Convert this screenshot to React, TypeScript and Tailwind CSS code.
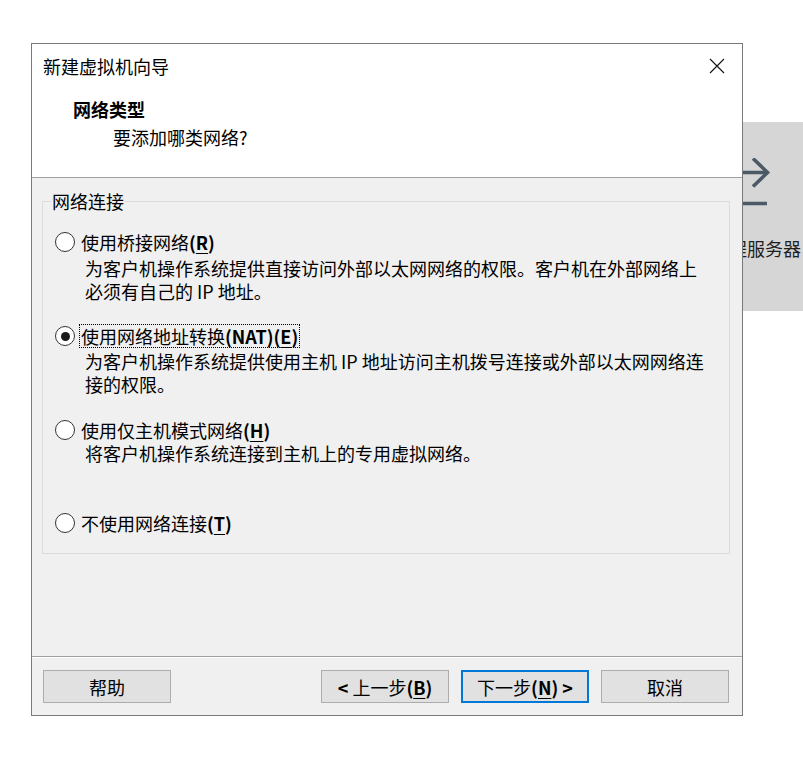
import React, { useState } from "react";

const font = "font-['Noto_Sans_CJK_SC',_'Noto_Sans',_sans-serif]";

function Radio({ checked }: { checked: boolean }) {
  return (
    <span className="w-[20px] h-[20px] rounded-full border border-[#333333] bg-white flex items-center justify-center shrink-0">
      {checked && <span className="w-[9px] h-[9px] rounded-full bg-[#1a1a1a]" />}
    </span>
  );
}

function U({ children }: { children: React.ReactNode }) {
  return <span className="underline underline-offset-[3px] decoration-1">{children}</span>;
}

type Opt = {
  id: string;
  label: React.ReactNode;
  desc: string[];
  descTop: string;
  top: string;
};

export default function App() {
  const [selected, setSelected] = useState("nat");

  const options: Opt[] = [
    {
      id: "bridge",
      label: (
        <>
          使用桥接网络<b>(<U>R</U>)</b>
        </>
      ),
      desc: ["为客户机操作系统提供直接访问外部以太网网络的权限。客户机在外部网络上", "必须有自己的 IP 地址。"],
      descTop: "mt-[3px]",
      top: "mt-[17px]",
    },
    {
      id: "nat",
      label: (
        <>
          使用网络地址转换<b>(NAT)(<U>E</U>)</b>
        </>
      ),
      desc: ["为客户机操作系统提供使用主机 IP 地址访问主机拨号连接或外部以太网网络连", "接的权限。"],
      descTop: "mt-[2px]",
      top: "mt-[21px]",
    },
    {
      id: "host",
      label: (
        <>
          使用仅主机模式网络<b>(<U>H</U>)</b>
        </>
      ),
      desc: ["将客户机操作系统连接到主机上的专用虚拟网络。"],
      descTop: "mt-0",
      top: "mt-[22px]",
    },
    {
      id: "none",
      label: (
        <>
          不使用网络连接<b>(<U>T</U>)</b>
        </>
      ),
      desc: [],
      descTop: "mt-0",
      top: "mt-[46px]",
    },
  ];

  return (
    <div className={`relative w-[803px] h-[759px] overflow-hidden bg-white text-black text-[18px] ${font}`}>
      {/* window behind the dialog */}
      <div className="absolute left-[700px] top-[122px] w-[200px] h-[189px] bg-[#d6d6d6] pl-[29px] pt-[36px]">
        <svg width="42" height="48" viewBox="0 0 42 48" fill="none" stroke="#4b5a66" strokeWidth="3.6">
          <path d="M0 14.5 H38" />
          <path d="M24 0.5 L38.5 14.5 L24 28.5" />
          <path d="M0 45.5 H38" />
        </svg>
        <div className="mt-[30px] leading-[24px] text-[#1e1e1e] whitespace-nowrap">程服务器</div>
      </div>

      {/* dialog */}
      <div className="absolute left-[31px] top-[43px] w-[712px] h-[673px] border border-[#7a7a7a] bg-[#f0f0f0] flex flex-col">
        <div className="bg-white border-b border-[#a0a0a0] h-[134px]">
          <div className="h-[42px] pt-[2px] flex items-center justify-between pl-[11px] pr-[17px]">
            <span className="leading-[24px]">新建虚拟机向导</span>
            <svg width="16" height="16" viewBox="0 0 16 16" stroke="#111" strokeWidth="1.1">
              <path d="M1 1 L15 15 M15 1 L1 15" />
            </svg>
          </div>
          <div className="mt-[11px] pl-[41px] leading-[24px] font-bold">网络类型</div>
          <div className="mt-[4px] pl-[81px] leading-[24px]">要添加哪类网络?</div>
        </div>

        <div className="flex-1 pt-[11px] pl-[10px] pr-[12px]">
          <fieldset className="border border-[#dcdcdc] pb-[18px]">
            <legend className="ml-[8px] px-[1px] leading-[24px]">网络连接</legend>
            {options.map((o) => (
              <div key={o.id} className={o.top}>
                <div
                  className="flex items-center pl-[12px] h-[24px] cursor-default"
                  onClick={() => setSelected(o.id)}
                >
                  <Radio checked={selected === o.id} />
                  <span
                    className={`ml-[4px] leading-[22px] px-[1px] border ${
                      selected === o.id ? "border-dotted border-black" : "border-transparent"
                    }`}
                  >
                    {o.label}
                  </span>
                </div>
                {o.desc.length > 0 && (
                  <div className={`${o.descTop} pl-[42px]`}>
                    {o.desc.map((d, i) => (
                      <div key={i} className="leading-[23px] whitespace-nowrap">
                        {d}
                      </div>
                    ))}
                  </div>
                )}
              </div>
            ))}
          </fieldset>
        </div>

        <div className="border-t border-[#a0a0a0]">
          <div className="border-t border-white h-[58px] flex items-center pl-[11px] pr-[13px]">
            <button className="w-[128px] h-[33px] bg-[#e1e1e1] border border-[#adadad] leading-[24px]">帮助</button>
            <div className="flex-1" />
            <div className="flex gap-[12px]">
              <button className="w-[128px] h-[33px] bg-[#e1e1e1] border border-[#adadad] leading-[24px]">
                <b>&lt;</b>&nbsp;上一步<b>(<U>B</U>)</b>
              </button>
              <button className="w-[128px] h-[33px] bg-[#e1e1e1] border-2 border-[#0078d7] leading-[24px]">
                下一步<b>(<U>N</U>)</b>&nbsp;<b>&gt;</b>
              </button>
              <button className="w-[128px] h-[33px] bg-[#e1e1e1] border border-[#adadad] leading-[24px]">取消</button>
            </div>
          </div>
        </div>
      </div>
    </div>
  );
}
